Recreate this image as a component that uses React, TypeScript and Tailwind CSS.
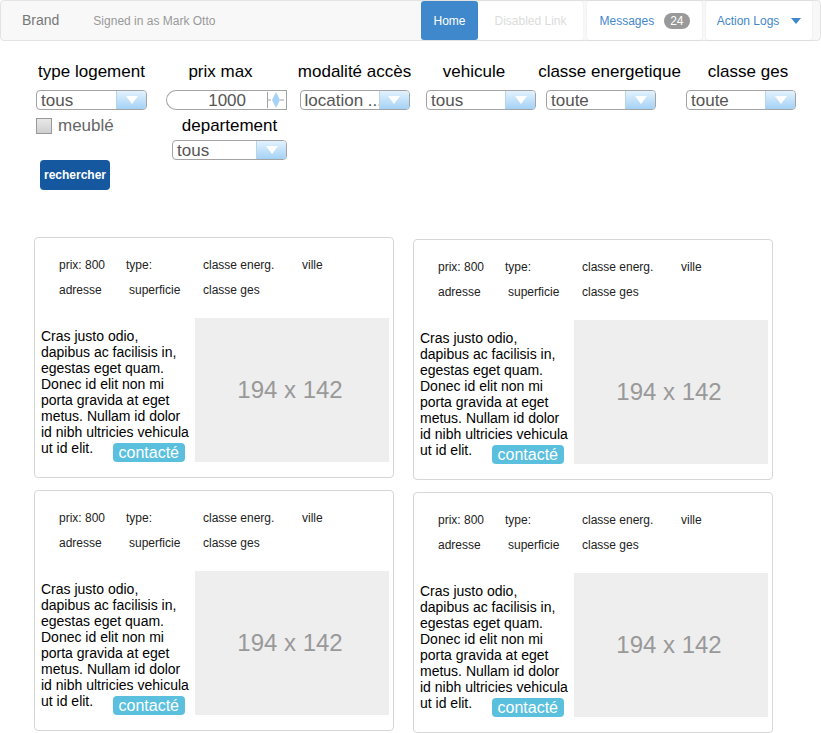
import React from "react";

const Select = ({ value, width }: { value: string; width: string }) => (
    <div className={`flex h-[20px] ${width} rounded-[4px] border border-[#a3a3a3] bg-white overflow-hidden`}>
        <div className="flex-1 pl-[4px] pt-[1px] text-[17px] leading-[18px] text-[#555] whitespace-nowrap overflow-hidden">
            {value}
        </div>
        <div className="w-[30px] flex items-center justify-center border-l border-[#bcd3e6] bg-gradient-to-b from-[#e3f2fd] to-[#a3d1f5]">
            <svg width="14" height="10" viewBox="0 0 14 10">
                <polygon points="1,1 13,1 7,9" fill="#fff" />
            </svg>
        </div>
    </div>
);

const NumberInput = () => (
    <div className="flex h-[20px] w-[121px] rounded-l-full rounded-r-[8px] border border-[#a3a3a3] bg-white">
        <div className="flex-1 pr-[20px] pt-[1px] text-right text-[17px] leading-[18px] text-[#555]">1000</div>
        <svg width="20" height="18" viewBox="0 0 20 18">
            <line x1="1.5" y1="1" x2="1.5" y2="17" stroke="#a3a3a3" />
            <line x1="1.5" y1="9" x2="5" y2="9" stroke="#a3a3a3" />
            <polygon points="10,1 14,9 10,17 6,9" fill="#a6d3f5" />
            <line x1="14" y1="9" x2="18" y2="9" stroke="#a3a3a3" />
        </svg>
    </div>
);

const Column = ({ label, children, className }: { label: string; children: React.ReactNode; className: string }) => (
    <div className={`flex flex-col ${className}`}>
        <div className="h-[20px] text-[17px] leading-[20px] text-black text-center whitespace-nowrap">{label}</div>
        <div className="mt-[8px]">{children}</div>
    </div>
);

const lines = [
    "Cras justo odio,",
    "dapibus ac facilisis in,",
    "egestas eget quam.",
    "Donec id elit non mi",
    "porta gravida at eget",
    "metus. Nullam id dolor",
    "id nibh ultricies vehicula",
];

const Card = () => (
    <div className="w-[360px] h-[241px] rounded-[4px] border border-[#d6d6d6] bg-white">
        <div className="pt-[14px] pl-[24px] text-[12px] text-[#222]">
            <div className="flex h-[25px] items-center">
                <span className="w-[67px]">prix: 800</span>
                <span className="w-[77px]">type:</span>
                <span className="w-[99px]">classe energ.</span>
                <span>ville</span>
            </div>
            <div className="flex h-[25px] items-center">
                <span className="w-[70px]">adresse</span>
                <span className="w-[74px]">superficie</span>
                <span>classe ges</span>
            </div>
        </div>
        <div className="mt-[16px] flex pl-[6px]">
            <div className="w-[154px] pt-[10px] text-[14px] leading-[16px] text-black">
                {lines.map((l) => (
                    <div key={l} className="whitespace-nowrap">{l}</div>
                ))}
                <div className="flex items-start">
                    <span>ut id elit.</span>
                    <span className="ml-auto mr-[10px] mt-[3px] h-[19px] rounded-[4px] bg-[#5bc0de] px-[6px] text-[16px] leading-[19px] text-white">
                        contacté
                    </span>
                </div>
            </div>
            <div className="w-[194px] h-[144px] bg-[#eeeeee] flex items-center justify-center pr-[4px] text-[24px] text-[#999]">
                194 x 142
            </div>
        </div>
    </div>
);

export default function App() {
    return (
        <div className="w-[821px] h-[733px] overflow-hidden bg-white font-['Liberation_Sans',Arial,sans-serif]">
            <nav className="flex h-[41px] w-[821px] items-center rounded-[4px] border border-[#e3e3e3] bg-[#f8f8f8]">
                <span className="ml-[21px] text-[14px] text-[#777]">Brand</span>
                <span className="ml-[34px] text-[12px] text-[#999]">Signed in as Mark Otto</span>
                <div className="ml-auto mr-[8px] flex h-[39px] items-stretch text-[12px]">
                    <div className="flex w-[57px] items-center justify-center rounded-[3px] bg-[#3f88cb] text-white">Home</div>
                    <div className="flex w-[105px] items-center justify-center rounded-[3px] bg-white text-[#dcdcdc] shadow-[0_0_2px_rgba(0,0,0,0.06)]">
                        Disabled Link
                    </div>
                    <div className="ml-[4px] flex w-[115px] items-center justify-center rounded-[3px] bg-white text-[#3f88cb] shadow-[0_0_2px_rgba(0,0,0,0.08)]">
                        Messages
                        <span className="ml-[10px] rounded-full bg-[#999] px-[6px] text-[12px] leading-[16px] text-white">24</span>
                    </div>
                    <div className="ml-[4px] flex w-[106px] items-center justify-center rounded-[3px] bg-white text-[#3f88cb] shadow-[0_0_2px_rgba(0,0,0,0.08)]">
                        Action Logs
                        <svg className="ml-[12px]" width="10" height="6" viewBox="0 0 10 6">
                            <polygon points="0,0 10,0 5,6" fill="#3f88cb" />
                        </svg>
                    </div>
                </div>
            </nav>

            <div className="h-[196px] pt-[21px]">
                <div className="flex pl-[36px]">
                    <div className="flex w-[111px] flex-col">
                        <Column label="type logement" className="w-[111px]">
                            <Select value="tous" width="w-[111px]" />
                        </Column>
                        <div className="mt-[8px] flex h-[16px] items-center">
                            <div className="h-[16px] w-[16px] border border-[#999] bg-gradient-to-b from-[#e8e8e8] to-[#cfcfcf]" />
                            <span className="ml-[6px] text-[17px] text-[#666]">meublé</span>
                        </div>
                        <button className="ml-[4px] mt-[26px] h-[30px] w-[70px] rounded-[4px] bg-[#16589f] text-[12px] font-bold text-white">
                            rechercher
                        </button>
                    </div>
                    <div className="ml-[19px] flex w-[121px] flex-col">
                        <div className="h-[20px] pr-[12px] text-center text-[17px] leading-[20px]">prix max</div>
                        <div className="mt-[8px]">
                            <NumberInput />
                        </div>
                        <div className="mt-[6px] h-[20px] pl-[6px] text-center text-[17px] leading-[20px]">departement</div>
                        <div className="mt-[4px] self-end">
                            <Select value="tous" width="w-[115px]" />
                        </div>
                    </div>
                    <Column label="modalité accès" className="ml-[11px] w-[113px] items-center">
                        <Select value="location ..." width="w-[110px]" />
                    </Column>
                    <Column label="vehicule" className="ml-[15px] w-[110px] items-center [&>div:first-child]:pr-[14px]">
                        <Select value="tous" width="w-[110px]" />
                    </Column>
                    <div className="ml-[2px] flex w-[143px] flex-col">
                        <div className="h-[20px] text-center text-[17px] leading-[20px]">classe energetique</div>
                        <div className="ml-[8px] mt-[8px]">
                            <Select value="toute" width="w-[110px]" />
                        </div>
                    </div>
                    <div className="ml-[5px] flex w-[110px] flex-col">
                        <div className="h-[20px] pl-[14px] text-center text-[17px] leading-[20px]">classe ges</div>
                        <div className="mt-[8px]">
                            <Select value="toute" width="w-[110px]" />
                        </div>
                    </div>
                </div>
            </div>

            <div className="flex pl-[34px]">
                <div className="flex flex-col gap-[12px]">
                    <Card />
                    <Card />
                </div>
                <div className="ml-[19px] mt-[2px] flex flex-col gap-[12px]">
                    <Card />
                    <Card />
                </div>
            </div>
        </div>
    );
}
